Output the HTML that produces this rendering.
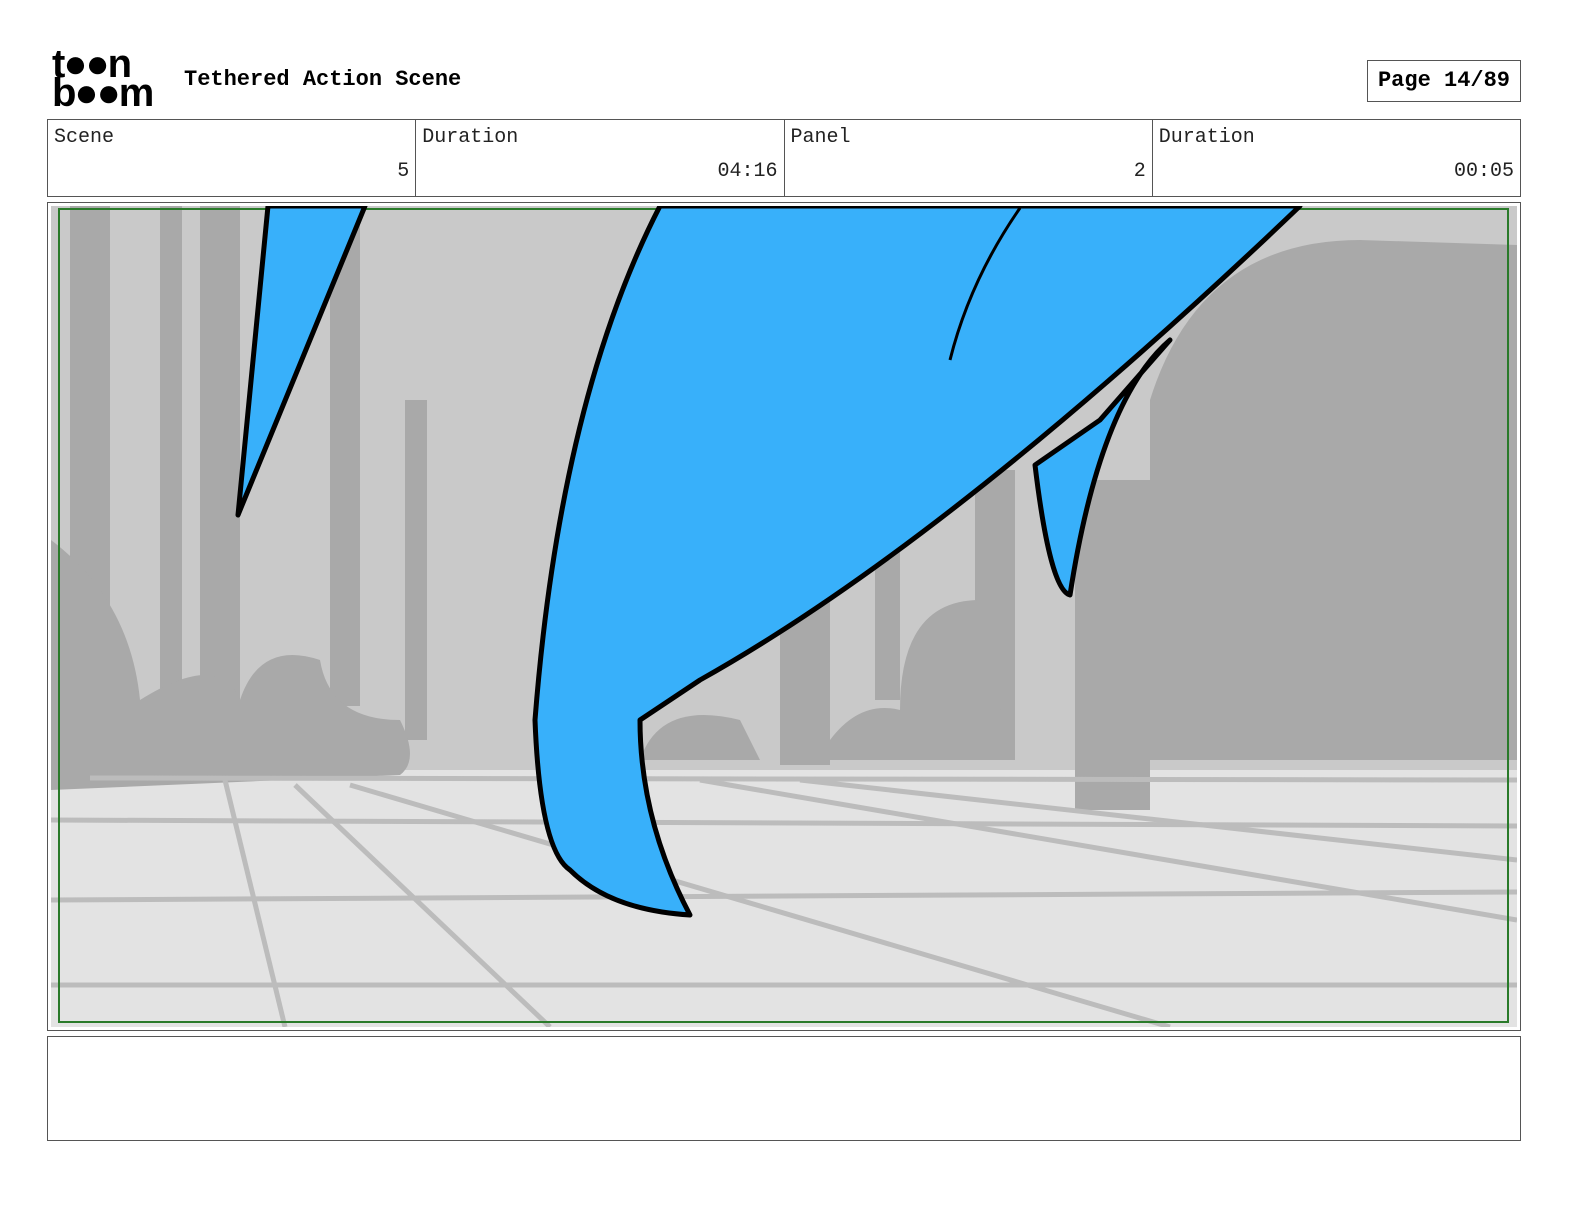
<!DOCTYPE html>
<html style="margin:0;width:1584px;height:1224px;overflow:hidden"><head><meta charset="utf-8"><style>
body{margin:0;background:#fff;width:1584px;height:1224px;position:relative;font-family:"Liberation Mono",monospace;overflow:hidden}
.abs{position:absolute}
.hdr{left:47px;top:119px;width:1472px;height:76px;border:1px solid #555;display:flex}
.cell{flex:1;border-right:1px solid #555;position:relative;font-size:20px;color:#222}
.cell:last-child{border-right:none}
.cell .l{position:absolute;left:6px;top:6px}
.cell .v{position:absolute;right:6px;top:40px}
</style></head><body>
<div class="abs" style="left:52px;top:50px;font-family:'Liberation Sans',sans-serif;font-weight:bold;font-size:40px;line-height:29px;letter-spacing:-2px">t●●n<br>b●●m</div>
<div class="abs" style="left:184px;top:67px;font-size:22px;font-weight:bold">Tethered Action Scene</div>
<div class="abs" style="left:1367px;top:60px;width:152px;height:40px;border:1px solid #555;font-size:22px;font-weight:bold;line-height:40px;text-align:center">Page 14/89</div>
<div class="abs hdr">
<div class="cell"><span class="l">Scene</span><span class="v">5</span></div>
<div class="cell"><span class="l">Duration</span><span class="v">04:16</span></div>
<div class="cell"><span class="l">Panel</span><span class="v">2</span></div>
<div class="cell"><span class="l">Duration</span><span class="v">00:05</span></div>
</div>
<div class="abs" style="left:47px;top:202px;width:1472px;height:827px;border:1px solid #555"></div>
<svg class="abs" style="left:51px;top:206px;display:block" width="1466" height="821" viewBox="51 206 1466 821">
<rect x="51" y="206" width="1466" height="821" fill="#c9c9c9"/>
<rect x="51" y="770" width="1466" height="260" fill="#e3e3e3"/>
<g fill="#a9a9a9">
<rect x="70" y="206" width="40" height="560"/><rect x="160" y="206" width="22" height="520"/><rect x="200" y="206" width="40" height="560"/>
<rect x="330" y="206" width="30" height="500"/><rect x="405" y="400" width="22" height="340"/><rect x="780" y="580" width="50" height="185"/>
<rect x="875" y="540" width="25" height="160"/><rect x="975" y="470" width="40" height="290"/><rect x="1075" y="480" width="75" height="330"/>
<path d="M1150 400 Q1200 240 1360 240 L1517 245 L1517 760 L1150 760Z"/>
<path d="M51 540 Q130 600 140 700 Q220 650 240 700 Q260 640 320 660 Q330 720 400 720 Q420 760 400 775 L51 790Z"/>
<path d="M830 740 Q860 700 900 710 Q900 600 980 600 L1010 760 L830 760Z"/>
<path d="M640 760 Q660 700 740 720 L760 760Z"/>
</g>
<g stroke="#bcbcbc" stroke-width="5" fill="none">
<path d="M51 820 L1517 826"/><path d="M51 900 L1517 892"/><path d="M51 985 L1517 985"/>
<path d="M225 780 L285 1027"/><path d="M295 785 L550 1027"/><path d="M350 785 L1170 1027"/>
<path d="M700 780 L1517 920"/><path d="M800 780 L1517 860"/><path d="M90 778 L1517 780"/>
</g>
<rect x="59" y="209" width="1449" height="813" fill="none" stroke="#2a7a2a" stroke-width="2"/>
<g fill="#38b0fa" stroke="#000" stroke-width="5" stroke-linejoin="round">
<path d="M268 206 L238 515 L365 206Z"/>
<path d="M660 206 Q560 400 535 720 Q540 850 570 870 Q610 910 690 915 Q640 820 640 720 L700 680 Q950 540 1300 206Z"/>
<path d="M1170 340 Q1100 400 1070 595 Q1050 590 1035 465 L1100 420Z"/>
</g>
<path d="M1020 208 Q970 280 950 360" stroke="#000" stroke-width="3" fill="none"/>
</svg>
<div class="abs" style="left:47px;top:1036px;width:1472px;height:103px;border:1px solid #555"></div>
</body></html>
